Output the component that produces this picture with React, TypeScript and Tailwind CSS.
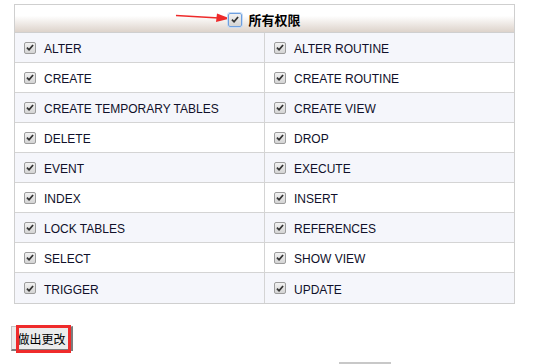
import React from "react";

const rows: [string, string][] = [
  ["ALTER", "ALTER ROUTINE"],
  ["CREATE", "CREATE ROUTINE"],
  ["CREATE TEMPORARY TABLES", "CREATE VIEW"],
  ["DELETE", "DROP"],
  ["EVENT", "EXECUTE"],
  ["INDEX", "INSERT"],
  ["LOCK TABLES", "REFERENCES"],
  ["SELECT", "SHOW VIEW"],
  ["TRIGGER", "UPDATE"],
];

const Check = ({ focus = false }: { focus?: boolean }) => (
  <span
    className={
      "relative inline-flex h-[12px] w-[12px] shrink-0 items-center justify-center rounded-[2px] border bg-gradient-to-b from-[#f2f2f2] to-[#d4d4d4] " +
      (focus ? "h-[14px] w-[14px] border-[#6e9fdf] outline outline-1 outline-[#c6dbf5]" : "border-[#9c9c9c]")
    }
  >
    <svg width="8" height="7" viewBox="0 0 9 8">
      <path d="M1 4.2 L3.4 6.6 L8 1.2" fill="none" stroke="#333" strokeWidth="2" />
    </svg>
  </span>
);

export default function App() {
  return (
    <div className="relative h-[364px] w-[535px] overflow-hidden bg-white font-['Liberation_Sans',Arial,sans-serif] text-[12px] text-[#10102a]">
      <div className="ml-[14px] mt-[4px] w-[501px] border border-[#cfcfcf]">
        <div className="relative flex h-[28px] items-center justify-center gap-[6px] border-b border-[#cfcfcf] bg-gradient-to-b from-white from-40% to-[#ddd3cb] pt-[2px]">
          <svg className="absolute left-[160px] top-[7px]" width="56" height="12" viewBox="0 0 56 12">
            <path d="M1 3.5 L44 6" stroke="#ee2a2a" strokeWidth="1.6" fill="none" />
            <path d="M42 1.5 L55 6.5 L41 10 Z" fill="#ee2a2a" />
          </svg>
          <Check focus />
          <span className="font-['Noto_Sans_CJK_SC',sans-serif] text-[13px] font-bold text-black">所有权限</span>
        </div>
        {rows.map(([a, b], i) => (
          <div
            key={a}
            className={
              "grid h-[30px] grid-cols-[250px_1fr] " +
              (i < rows.length - 1 ? "border-b border-[#d4d4d4] " : "") +
              (i % 2 === 0 ? "bg-[#f5f6fb]" : "bg-white")
            }
          >
            <div className="flex items-center gap-[8px] border-r border-[#d4d4d4] pl-[9px]">
              <Check />
              <span className="pt-[3px]">{a}</span>
            </div>
            <div className="flex items-center gap-[8px] pl-[9px]">
              <Check />
              <span className="pt-[3px]">{b}</span>
            </div>
          </div>
        ))}
      </div>
      <div className="relative ml-[11px] mt-[22px] w-fit">
        <button className="h-[25px] w-[62px] border border-[#c4c4c4] border-b-[#7c7c7c] border-r-[#7c7c7c] border-b-2 border-r-2 bg-[#ececec] pt-[1px] font-['Noto_Sans_CJK_SC',sans-serif] text-[12px] text-black">
          做出更改
        </button>
        <span className="pointer-events-none absolute left-[5px] top-[-1px] h-[28px] w-[55px] border-[3px] border-[#ef2b2b]" />
      </div>
      <div className="absolute left-[339px] top-[362px] h-[2px] w-[52px] bg-[#c8c8c8]" />
    </div>
  );
}
